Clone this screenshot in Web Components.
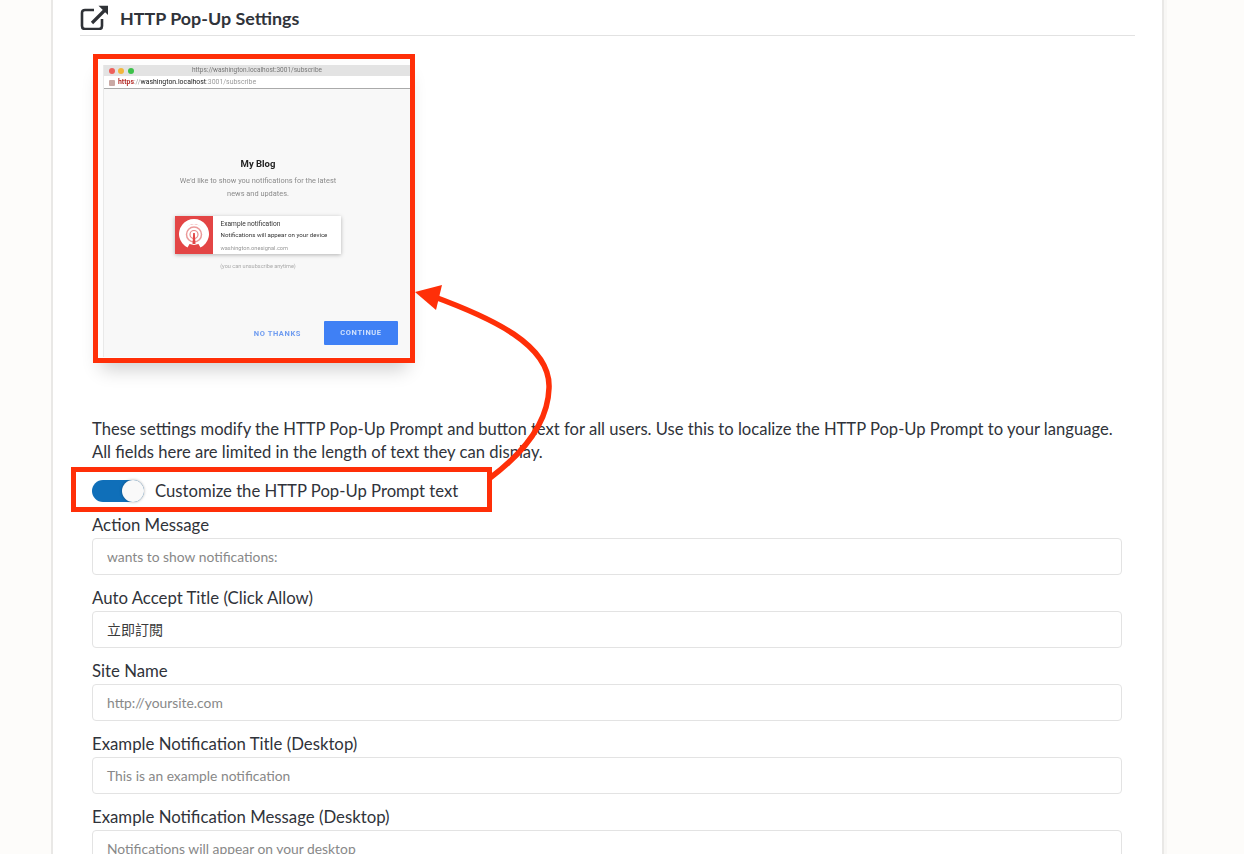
<!DOCTYPE html>
<html lang="en"><head><meta charset="utf-8"><title>HTTP Pop-Up Settings</title>
<style>
html,body{margin:0;padding:0;height:854px;overflow:hidden;background:#fdfcfa}
body{font-family:Lato,"Noto Sans CJK TC",sans-serif;color:#2f3237}
</style></head><body>
<x-page>
  <x-heading>HTTP Pop-Up Settings</x-heading>
  <x-popup-preview></x-popup-preview>
  <x-desc>These settings modify the HTTP Pop-Up Prompt and button text for all users. Use this to localize the HTTP Pop-Up Prompt to your language. All fields here are limited in the length of text they can display.</x-desc>
  <x-toggle>Customize the HTTP Pop-Up Prompt text</x-toggle>
  <x-field label="Action Message" placeholder="wants to show notifications:"></x-field>
  <x-field label="Auto Accept Title (Click Allow)" value="立即訂閱"></x-field>
  <x-field label="Site Name" placeholder="http://yoursite.com"></x-field>
  <x-field label="Example Notification Title (Desktop)" placeholder="This is an example notification"></x-field>
  <x-field label="Example Notification Message (Desktop)" placeholder="Notifications will appear on your desktop"></x-field>
</x-page>
<script>
function def(name, html, init){
  customElements.define(name, class extends HTMLElement{
    constructor(){super();this.attachShadow({mode:'open'}).innerHTML=html;}
    connectedCallback(){ if(init) init(this); }
  });
}
def('x-page',`<style>
:host{display:block;height:854px;overflow:hidden;position:relative}
.card{box-sizing:border-box;margin-left:51px;width:1113px;height:854px;background:#fff;
 border-left:2px solid #e9e8e6;border-right:2px solid #e9e8e6;padding:0 27px 0 26px;overflow:hidden}
.strip{position:absolute;left:1164px;top:0;bottom:0;width:3px;background:#f8f7f5}
svg{position:absolute;left:0;top:0;pointer-events:none}
</style>
<div class="card"><slot></slot></div><div class="strip"></div>
<svg width="1244" height="854" viewBox="0 0 1244 854" aria-hidden="true">
<path d="M432 296C492 318 551 345 549 388C548 424 522 454 490 478" fill="none" stroke="#ff2f08" stroke-width="5.500"/>
<path d="M415 292L442 285L436 310Z" fill="#ff2f08"/>
</svg>`);
def('x-heading',`<style>
:host{display:flex;align-items:center;gap:11px;height:35px;border-bottom:1px solid #e2e2e2;
 font:700 17.900px/35px Lato,sans-serif;color:#30333a;margin-left:1px}
svg{flex:none;margin:-1px 0 0 0}
span{margin-top:2px}
</style>
<svg width="29" height="26" viewBox="0 0 29 26" fill="none" stroke="#2f3237" stroke-width="2.6">
<path d="M14 6H5Q2 6 2 9V22Q2 25 5 25H19Q22 25 22 22V15"/>
<path d="M12 19L26 5" stroke-width="3.2"/><path d="M18.500 1.700H28V11Z" fill="#2f3237" stroke="none"/>
</svg><span><slot></slot></span>`);
def('x-popup-preview',`<style>
:host{display:block;margin:18px 0 0 14px;width:322px;height:309px;box-sizing:border-box;border:5.500px solid #ff2f08;
 background:#fdfdfd;box-shadow:0 14px 18px -8px rgba(0,0,0,.2);font-family:Roboto,sans-serif;color:#333}
.win{margin:6px 0 0 5px;height:292px;background:#f8f8f8;border-left:1px solid #e9e9e9;display:flex;flex-direction:column;align-items:stretch;filter:blur(.3px)}
.title{height:11px;background:#e3e3e3;position:relative;text-align:center;font-size:6.500px;line-height:11px;color:#777}
.dots{position:absolute;left:5px;top:2.500px;display:flex;gap:3.300px}
.dots i{width:6px;height:6px;border-radius:50%;display:block}
.addr{height:12px;background:#fff;border-bottom:1px solid #aaa;font-size:6.900px;line-height:13px;padding-left:14px;color:#999;white-space:nowrap;position:relative}
.addr u{position:absolute;left:5px;top:3.500px;width:6px;height:6px;background:#c9a9a5;border-radius:1px}
.addr b{color:#b5302c;font-weight:700}.addr em{font-style:normal;color:#222}
.body{flex:1;display:flex;flex-direction:column;align-items:center;position:relative;margin-left:2px}
h1{margin:69px 0 0;font-size:9.500px;line-height:12px;font-weight:700;color:#222}
p{margin:4px 0 0;font-size:7.400px;line-height:13px;color:#8b8b8b;text-align:center}
.note{display:flex;width:166px;height:38px;margin-top:16px;background:#fff;box-shadow:0 1px 4px rgba(0,0,0,.28);margin-left:-1px}
.sq{width:38px;height:38px;background:#e34545;flex:none}
.txt{padding:3px 0 0 8px;font-size:6.600px;line-height:10.500px;color:#333;white-space:nowrap}
.txt div:nth-child(2){font-size:6.150px}.txt div:nth-child(3){font-size:5.650px;color:#999;margin-top:3px}
small{font-size:5.550px;color:#aaa;margin-top:8px;line-height:8px}
.btns{position:absolute;right:12px;top:232px;display:flex;align-items:center;gap:23px;font-size:7.500px;font-weight:700;letter-spacing:.6px}
.no{color:#6f9cf0}.yes{width:74px;height:24px;line-height:24px;text-align:center;background:#3f80f5;color:#cfe0fd;border-radius:1px}
</style>
<div class="win">
 <div class="title"><div class="dots"><i style="background:#ee5f5b"></i><i style="background:#f2b63c"></i><i style="background:#3cc14a"></i></div>https://washington.localhost:3001/subscribe</div>
 <div class="addr"><u></u><b>https</b>://<em>washington.localhost</em>:3001/subscribe</div>
 <div class="body">
  <h1>My Blog</h1>
  <p>We'd like to show you notifications for the latest<br>news and updates.</p>
  <div class="note"><div class="sq"><svg width="38" height="38" viewBox="0 0 38 38" fill="none">
   <path d="M12.500 31.500A15 15 0 1 1 25.500 31.500L22 25.500A9 9 0 1 0 16 25.500Z" fill="#fff"/>
   <circle cx="19" cy="18.500" r="10.500" fill="#fff"/>
   <circle cx="19" cy="18.500" r="7.500" stroke="#eb9a9a" stroke-width="1.500"/><circle cx="19" cy="18.500" r="4" stroke="#e98a8a" stroke-width="1.200"/>
   <path d="M18.200 17H19.800L20.500 28H17.500Z" fill="#e34545"/></svg></div>
   <div class="txt"><div>Example notification</div><div>Notifications will appear on your device</div><div>washington.onesignal.com</div></div></div>
  <small>(you can unsubscribe anytime)</small>
  <div class="btns"><span class="no">NO THANKS</span><span class="yes">CONTINUE</span></div>
 </div>
</div>`);
def('x-desc',`<style>
:host{display:block;margin:0 0 0 13px;padding-top:55px;width:1030px;font:400 16.600px/23px Lato,sans-serif;color:#30333a}
</style><slot></slot>`);
def('x-toggle',`<style>
:host{display:flex;align-items:center;gap:11px;width:421px;height:45px;box-sizing:border-box;margin:3px 0 0 -8px;
 border:5px solid #ff2f08;padding:2px 0 0 16px;font:400 16.700px/23px Lato,sans-serif;color:#30333a;background:#fff;position:relative}
.sw{width:52px;height:22px;border-radius:11px;background:#0f6fb9;position:relative;flex:none}
.sw i{position:absolute;right:0;top:0;width:22px;height:22px;border-radius:50%;background:#f9f9f9;box-shadow:0 0 3px rgba(0,0,0,.35)}
span+span{margin-top:2px}
</style><span class="sw"><i></i></span><span><slot></slot></span>`);
def('x-field',`<style>
:host{display:block;margin:0 0 0 13px;width:1030px;height:73px;font:400 16.780px/26px Lato,sans-serif;color:#30333a}
.l{height:26px}
.i{box-sizing:border-box;height:37px;border:1px solid #e3e3e3;border-radius:4px;background:#fff;padding-left:14px;
 font:400 13.850px/35px Lato,"Noto Sans CJK TC",sans-serif;color:#888}
.i.v{color:#3a3a3a;font-size:14px}
</style><div class="l"></div><div class="i"></div>`,el=>{
  const s=el.shadowRoot; s.querySelector('.l').textContent=el.getAttribute('label');
  const i=s.querySelector('.i'); const v=el.getAttribute('value');
  i.textContent=v||el.getAttribute('placeholder'); if(v)i.classList.add('v');
});
</script>
</body></html>
